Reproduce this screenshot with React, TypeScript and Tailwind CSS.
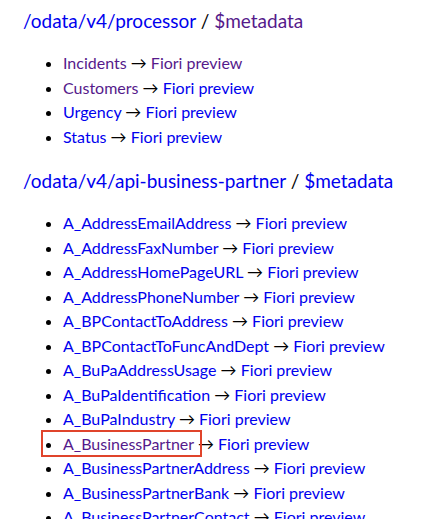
import React from 'react';

type Entity = { name: string; visited?: boolean; previewVisited?: boolean; marked?: boolean };

const services: { path: string; metaVisited?: boolean; entities: Entity[] }[] = [
  {
    path: '/odata/v4/processor',
    metaVisited: true,
    entities: [
      { name: 'Incidents', visited: true, previewVisited: true },
      { name: 'Customers', visited: true },
      { name: 'Urgency' },
      { name: 'Status' },
    ],
  },
  {
    path: '/odata/v4/api-business-partner',
    entities: [
      { name: 'A_AddressEmailAddress' },
      { name: 'A_AddressFaxNumber' },
      { name: 'A_AddressHomePageURL' },
      { name: 'A_AddressPhoneNumber' },
      { name: 'A_BPContactToAddress' },
      { name: 'A_BPContactToFuncAndDept' },
      { name: 'A_BuPaAddressUsage' },
      { name: 'A_BuPaIdentification' },
      { name: 'A_BuPaIndustry' },
      { name: 'A_BusinessPartner', visited: true, marked: true },
      { name: 'A_BusinessPartnerAddress' },
      { name: 'A_BusinessPartnerBank' },
      { name: 'A_BusinessPartnerContact' },
    ],
  },
];

const link = (visited?: boolean) => (visited ? 'text-[#551a8b]' : 'text-[#0000ee]');

export default function App() {
  return (
    <div className="min-h-screen bg-white px-[23px] pt-[9px] font-['Lato',sans-serif] text-black overflow-hidden">
      {services.map((s, i) => (
        <div key={s.path} className={i > 0 ? 'mt-[20px]' : ''}>
          <h2 className="text-[19px] leading-[24px]">
            <a className={link(false)}>{s.path}</a> / <a className={link(s.metaVisited)}>$metadata</a>
          </h2>
          <ul className="mt-[18px] list-disc pl-[40px] text-[16px] leading-[24.5px]">
            {s.entities.map((e) => (
              <li key={e.name} className="relative whitespace-nowrap">
                {e.marked && (
                  <span className="absolute left-[-22px] top-[-2px] h-[27px] w-[161px] border-2 border-[#e0442b]" />
                )}
                <a className={link(e.visited)}>{e.name}</a> → <a className={link(e.previewVisited)}>Fiori preview</a>
              </li>
            ))}
          </ul>
        </div>
      ))}
    </div>
  );
}
